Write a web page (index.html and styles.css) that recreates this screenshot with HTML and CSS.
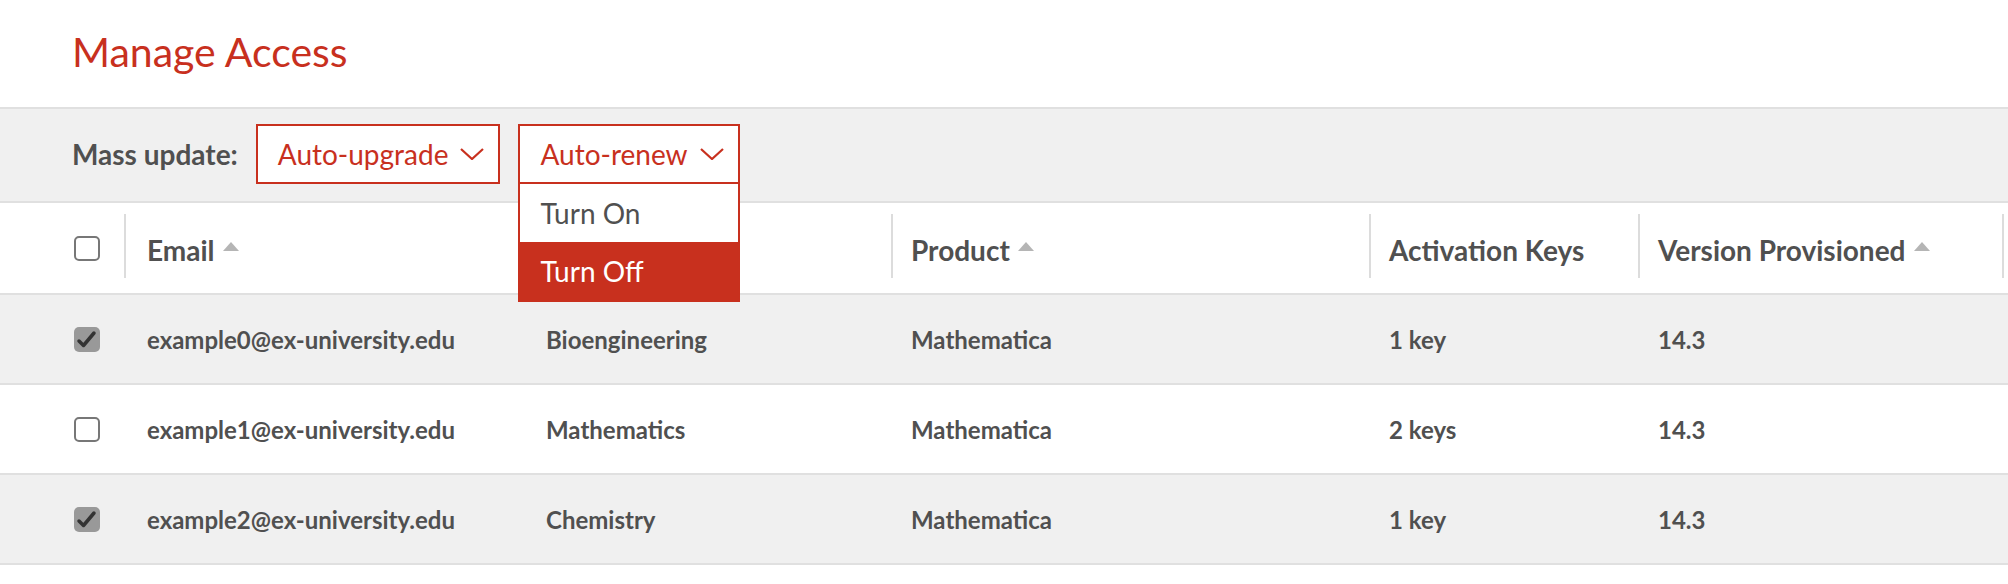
FILE: index.html
```html
<!DOCTYPE html>
<html lang="en">
<head>
    <meta charset="UTF-8">
    <meta name="viewport" content="width=device-width, initial-scale=1.0">
    <title>Manage Access</title>
    <link rel="stylesheet" href="styles.css">
</head>
<body>
    <div class="page-head">
        <h1>Manage Access</h1>
    </div>

    <div class="toolbar">
        <span class="toolbar-label">Mass update:</span>
        <div class="select">
            <button type="button" class="select-btn">
                Auto-upgrade
                <svg class="chev" width="24" height="12" viewBox="0 0 24 12"><polyline points="1,1 12,11 23,1" /></svg>
            </button>
        </div>
        <div class="select open">
            <button type="button" class="select-btn">
                Auto-renew
                <svg class="chev" width="24" height="12" viewBox="0 0 24 12"><polyline points="1,1 12,11 23,1" /></svg>
            </button>
            <ul class="menu">
                <li>Turn On</li>
                <li class="active">Turn Off</li>
            </ul>
        </div>
    </div>

    <div class="table">
        <div class="row head">
            <div class="cell cell-check"><span class="cb"></span></div>
            <div class="cell col-email"><div class="th">Email <span class="sort"></span></div></div>
            <div class="cell"><div class="th"></div></div>
            <div class="cell"><div class="th">Product <span class="sort"></span></div></div>
            <div class="cell"><div class="th">Activation Keys</div></div>
            <div class="cell"><div class="th">Version Provisioned <span class="sort"></span></div></div>
            <div class="cell"><div class="th"></div></div>
        </div>

        <div class="row shaded">
            <div class="cell cell-check"><span class="cb checked"><svg width="26" height="25" viewBox="0 0 26 25"><polyline points="5,14 9.5,18.5 20,6" /></svg></span></div>
            <div class="cell col-email">example0@ex-university.edu</div>
            <div class="cell">Bioengineering</div>
            <div class="cell">Mathematica</div>
            <div class="cell">1 key</div>
            <div class="cell">14.3</div>
            <div class="cell"></div>
        </div>
        <div class="row">
            <div class="cell cell-check"><span class="cb"></span></div>
            <div class="cell col-email">example1@ex-university.edu</div>
            <div class="cell">Mathematics</div>
            <div class="cell">Mathematica</div>
            <div class="cell">2 keys</div>
            <div class="cell">14.3</div>
            <div class="cell"></div>
        </div>
        <div class="row shaded">
            <div class="cell cell-check"><span class="cb checked"><svg width="26" height="25" viewBox="0 0 26 25"><polyline points="5,14 9.5,18.5 20,6" /></svg></span></div>
            <div class="cell col-email">example2@ex-university.edu</div>
            <div class="cell">Chemistry</div>
            <div class="cell">Mathematica</div>
            <div class="cell">1 key</div>
            <div class="cell">14.3</div>
            <div class="cell"></div>
        </div>
    </div>
</body>
</html>
```

FILE: styles.css
```css
body {
    font-family: "Source Sans Pro", Lato, "Liberation Sans", sans-serif;
    color: #505050;
    margin: 0;
    background: #fff;
}
.page-head {
    padding: 27px 0 30px 72px;
    border-bottom: 2px solid #e0e0e0;
}
.page-head h1 {
    margin: 0;
    font-size: 41px;
    line-height: 50px;
    font-weight: 400;
    color: #c8301e;
}

/* mass update bar */
.toolbar {
    display: flex;
    align-items: center;
    gap: 18px;
    padding: 15px 0 17px 72px;
    background: #f0f0f0;
    border-bottom: 2px solid #e0e0e0;
}
.toolbar-label {
    font-size: 28px;
    font-weight: 700;
}
.select {
    position: relative;
}
.select-btn {
    display: flex;
    align-items: center;
    gap: 12px;
    height: 60px;
    padding: 0 14px 0 20px;
    border: 2px solid #c8301e;
    background: #fff;
    color: #c8301e;
    font-family: inherit;
    font-size: 28px;
    cursor: pointer;
}
.chev polyline {
    fill: none;
    stroke: #c8301e;
    stroke-width: 2.2;
}
.menu {
    position: absolute;
    top: 60px;
    left: 0;
    right: 0;
    margin: 0;
    padding: 0;
    list-style: none;
    background: #fff;
    border: 2px solid #c8301e;
    border-top: none;
    z-index: 5;
}
.menu li {
    height: 58px;
    display: flex;
    align-items: center;
    padding-left: 20px;
    font-size: 28px;
    color: #505050;
}
.menu li.active {
    background: #c8301e;
    color: #fff;
}

/* table */
.row {
    display: grid;
    grid-template-columns: 124px 402px 365px 478px 269px 364px 1fr;
    height: 88px;
    border-bottom: 2px solid #e0e0e0;
    font-size: 24px;
    font-weight: 700;
}
.row.head {
    height: 90px;
    font-size: 28px;
}
.row.shaded {
    background: #f0f0f0;
}
.cell {
    display: flex;
    align-items: center;
    padding-left: 20px;
    white-space: nowrap;
}
.cell-check {
    padding-left: 74px;
}
.col-email {
    padding-left: 23px;
}
.head .cell {
    padding-left: 0;
}
.head .cell-check {
    padding-left: 74px;
}
.th {
    display: flex;
    align-items: center;
    box-sizing: border-box;
    height: 64px;
    margin-bottom: 4px;
    padding: 8px 0 0 18px;
    border-left: 2px solid #dcdcdc;
}
.head .col-email .th {
    padding-left: 21px;
}
.sort {
    width: 0;
    height: 0;
    margin-left: 8px;
    margin-bottom: 8px;
    border-left: 8.5px solid transparent;
    border-right: 8.5px solid transparent;
    border-bottom: 9px solid #b5b5b5;
}
.cb {
    display: inline-block;
    box-sizing: border-box;
    width: 26px;
    height: 25px;
    border: 2.5px solid #777;
    border-radius: 5px;
    background: #fff;
}
.cb.checked {
    background: #999;
    border: none;
}
.cb svg {
    display: block;
}
.cb polyline {
    fill: none;
    stroke: #333;
    stroke-width: 3.5;
    stroke-linecap: round;
    stroke-linejoin: round;
}
```
